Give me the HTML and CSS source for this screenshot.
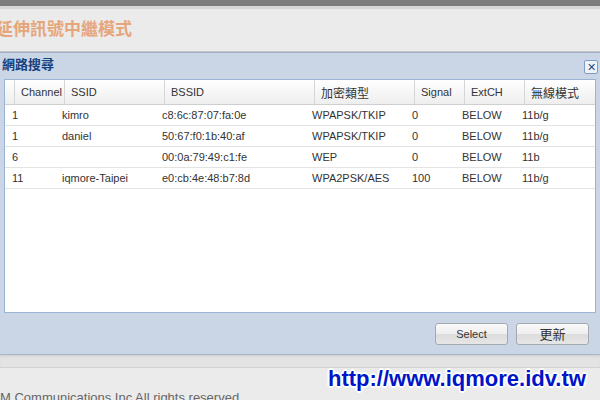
FILE: index.html
```html
<!DOCTYPE html>
<html lang="zh-Hant">
<head>
    <meta charset="UTF-8">
    <meta name="viewport" content="width=device-width, initial-scale=1.0">
    <title>延伸訊號中繼模式</title>
    <link rel="stylesheet" href="styles.css">
</head>
<body>
    <div class="topbar"></div>
    <div class="page-title">延伸訊號中繼模式</div>

    <div class="dialog">
        <div class="dialog-head">
            <span class="dialog-title">網路搜尋</span>
            <span class="close">&#x2715;</span>
        </div>
        <div class="grid">
            <div class="grid-head">
                <div class="hcell blank"></div>
                <div class="hcell c1">Channel</div>
                <div class="hcell c2">SSID</div>
                <div class="hcell c3">BSSID</div>
                <div class="hcell c4 cjk">加密類型</div>
                <div class="hcell c5">Signal</div>
                <div class="hcell c6">ExtCH</div>
                <div class="hcell c7 cjk">無線模式</div>
            </div>
            <div class="row">
                <div class="cell c1">1</div>
                <div class="cell c2">kimro</div>
                <div class="cell c3">c8:6c:87:07:fa:0e</div>
                <div class="cell c4">WPAPSK/TKIP</div>
                <div class="cell c5">0</div>
                <div class="cell c6">BELOW</div>
                <div class="cell c7">11b/g</div>
            </div>
            <div class="row">
                <div class="cell c1">1</div>
                <div class="cell c2">daniel</div>
                <div class="cell c3">50:67:f0:1b:40:af</div>
                <div class="cell c4">WPAPSK/TKIP</div>
                <div class="cell c5">0</div>
                <div class="cell c6">BELOW</div>
                <div class="cell c7">11b/g</div>
            </div>
            <div class="row">
                <div class="cell c1">6</div>
                <div class="cell c2"></div>
                <div class="cell c3">00:0a:79:49:c1:fe</div>
                <div class="cell c4">WEP</div>
                <div class="cell c5">0</div>
                <div class="cell c6">BELOW</div>
                <div class="cell c7">11b</div>
            </div>
            <div class="row">
                <div class="cell c1">11</div>
                <div class="cell c2">iqmore-Taipei</div>
                <div class="cell c3">e0:cb:4e:48:b7:8d</div>
                <div class="cell c4">WPA2PSK/AES</div>
                <div class="cell c5">100</div>
                <div class="cell c6">BELOW</div>
                <div class="cell c7">11b/g</div>
            </div>
        </div>
        <div class="dialog-foot">
            <button class="btn">Select</button>
            <button class="btn cjk">更新</button>
        </div>
    </div>

    <div class="band"></div>
    <div class="footer">M Communications Inc All rights reserved</div>

    <div class="watermark">http://www.iqmore.idv.tw</div>
</body>
</html>
```

FILE: styles.css
```css
body{
    margin: 0;
    width: 600px;
    height: 400px;
    overflow: hidden;
    position: relative;
    background-color: #ebebeb;
    font-family: "Liberation Sans", "Noto Sans CJK TC", sans-serif;
}
.topbar{
    height: 6px;
    background-color: #7c7c7c;
    border-bottom: 3px solid #d6d6d6;
}
.page-title{
    height: 42px;
    line-height: 37px;
    margin-left: -4px;
    font-size: 17px;
    font-weight: bold;
    color: #e6a57a;
    font-family: "Noto Sans CJK TC", sans-serif;
    border-bottom: 1px solid #c4c4c4;
}
.dialog{
    background-color: #cad6e6;
    border-top: 1px solid #9fb0c8;
    border-bottom: 1px solid #a6b4c6;
    height: 301px;
    display: flex;
    flex-direction: column;
}
.dialog-head{
    height: 26px;
    display: flex;
    align-items: center;
    padding: 0 2px;
}
.dialog-title{
    font-family: "Noto Sans CJK TC", sans-serif;
    font-size: 13px;
    font-weight: bold;
    color: #17407e;
    margin-top: -5px;
}
.close{
    margin-left: auto;
    width: 12px;
    height: 12px;
    line-height: 12px;
    font-size: 11px;
    text-align: center;
    color: #274a80;
    background-color: #eef3fa;
    border: 1px solid #7e9cc4;
    border-radius: 2px;
    margin-top: 1px;
}
.grid{
    margin: 0 4px;
    height: 232px;
    background-color: #fff;
    border: 1px solid #9cb4d4;
    font-size: 11px;
    color: #333;
}
.grid-head{
    display: flex;
    height: 24px;
    background: linear-gradient(#ffffff, #eeeeee);
    border-bottom: 1px solid #cfcfcf;
}
.hcell{
    line-height: 25px;
    padding-left: 6px;
    border-right: 1px solid #d6d6d6;
    box-sizing: border-box;
    color: #333;
}
.hcell.blank{
    width: 10px;
    padding: 0;
}
.hcell.cjk{
    font-family: "Noto Sans CJK TC", sans-serif;
    font-size: 12px;
}
.c1{ width: 50px; }
.c2{ width: 100px; }
.c3{ width: 150px; }
.c4{ width: 100px; }
.c5{ width: 50px; }
.c6{ width: 60px; }
.c7{ width: 70px; }
.hcell.c7{ border-right: none; }
.row{
    display: flex;
    height: 20px;
    border-bottom: 1px solid #e3e3e3;
}
.cell{
    line-height: 20px;
    padding-left: 7px;
    box-sizing: border-box;
    white-space: nowrap;
}
.dialog-foot{
    flex: 1;
    display: flex;
    justify-content: flex-end;
    align-items: center;
    gap: 8px;
    padding: 0 11px 0 0;
}
.btn{
    width: 73px;
    height: 22px;
    padding: 0;
    font-family: "Liberation Sans", sans-serif;
    font-size: 11px;
    color: #333;
    border: 1px solid #a4a9b0;
    border-radius: 3px;
    background: linear-gradient(#fafafa 0%, #eeeeee 50%, #dcdcdc 51%, #e6e6e6 100%);
}
.btn.cjk{
    font-family: "Noto Sans CJK TC", sans-serif;
    font-size: 13px;
}
.band{
    height: 12px;
    background-color: #e3e3e3;
    border-bottom: 1px solid #d2d2d2;
    box-shadow: inset 0 2px 2px rgba(0, 0, 0, .06);
}
.footer{
    padding-top: 23px;
    font-size: 13px;
    color: #666;
    line-height: 14px;
}
.watermark{
    position: absolute;
    left: 328px;
    top: 366px;
    font-size: 22px;
    font-weight: bold;
    color: #0014c8;
    text-shadow: -2px 0 #fff, 2px 0 #fff, 0 -2px #fff, 0 2px #fff,
        -1px -1px #fff, 1px 1px #fff, -1px 1px #fff, 1px -1px #fff;
}
```
